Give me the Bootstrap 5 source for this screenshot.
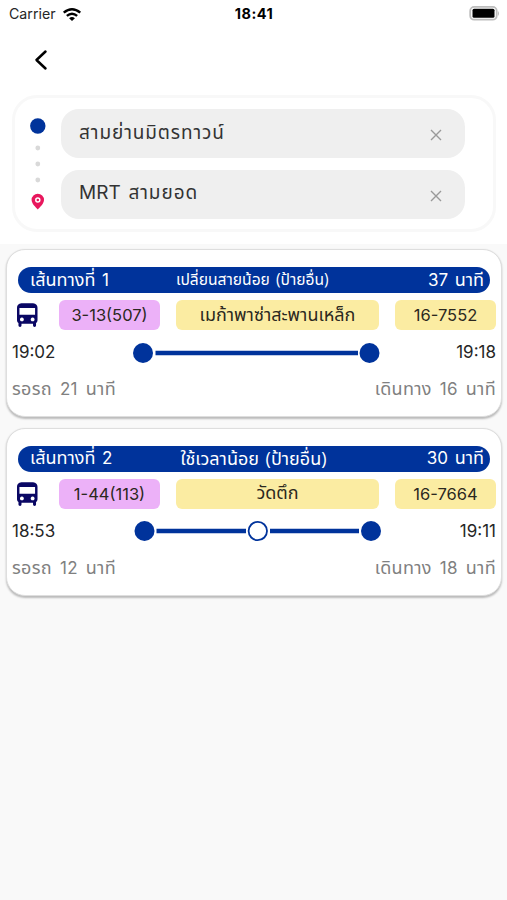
<!DOCTYPE html>
<html lang="th">
<head>
<meta charset="utf-8">
<meta name="viewport" content="width=device-width, initial-scale=1">
<title>เส้นทาง</title>
<link href="https://cdn.jsdelivr.net/npm/bootstrap@5.3.0/dist/css/bootstrap.min.css" rel="stylesheet">
<style>
body{font-family:"Open Sans","Noto Sans Thai",sans-serif;background:#f9f9f9;color:#262626;font-size:18px;line-height:24px;min-height:900px;overflow:hidden}
svg{display:block;flex:none}
.top-area{height:244px}
.status-row{height:28px;font-family:Inter,sans-serif;font-size:14.2px;padding:0 7px 0 9px}
.status-row>div{flex:1 1 0}
.status-row>.status-time{flex:none;font-size:14.5px;margin-right:1px}
.nav-row{height:67px;padding:21px 0 0 34px}
.search-box{margin:0 11px 0 12px;height:137px;border:3px solid #f8f8f8;border-radius:25px;padding:11px 28px 10px 15px}
.route-marks{width:16px;margin-right:15px;padding-top:4px}
.field{height:49px;border-radius:18px;background:#efefef;padding:0 22px 4px 18px;font-size:19px;color:#333}
.field svg{margin-top:6px}
.field .t{letter-spacing:.9px}
.trips{padding:5px 5px 0 6px;gap:10.5px}
.trip{height:168px;border:1px solid #dedede;border-radius:19px;background:#fff;box-shadow:0 1.5px 2px #bbb;padding:17px 5px 0}
.trip-head{height:26px;margin:0 6px;border-radius:13px;background:#00339b;color:#fff;padding:0 6px 2px 12px}
.trip-head .t{word-spacing:2px}
.trip-head .reason{flex:1;padding-left:68px}
.trip-head .reason-small{font-size:15.6px;padding-left:67px}
.chips{margin-top:7px;height:31px}
.bus{width:30px;margin-right:17px;padding:3px 0 0 5px}
.chip{height:30px;border-radius:6px;background:#fbeca2;color:#2b2820;display:flex;align-items:center;justify-content:center}
.chip-line{width:101px;background:#ecb1f8;margin-right:16px}
.chip-line .n{font-size:16.5px}
.chip-stop{width:203px;margin-right:16px;padding-bottom:3px}
.chip-plate{width:101px}
.chip-plate .n{font-size:16.5px}
.times{height:24px;margin-top:9px}
.times svg{margin-top:1px}
.waits{margin-top:12px;color:#808080}
.waits .t{letter-spacing:.3px;word-spacing:3px}
.t{display:inline-block;white-space:nowrap}
.n{font-family:Inter,sans-serif;font-size:17px}
.big-latin{font-size:19px;letter-spacing:0;margin-right:2px}
</style>
</head>
<body>
<svg width="0" height="0" class="position-absolute"><defs><g id="bus"><path fill-rule="evenodd" d="M4.500 0h12C19.500.6 21 2 21 4.500V17c0 1.500-.5 2.500-1.500 3.300V22.500c0 1.200-.6 1.700-1.500 1.700s-1.600-.5-1.600-1.700V21H4.600v1.500c0 1.200-.6 1.700-1.500 1.700s-1.600-.5-1.600-1.700v-2.200C.5 19.500 0 18.500 0 17V4.500C0 2 1.500.6 4.500 0ZM2.500 4.800v7h16v-7ZM5 14.500a2 2 0 1 0 .01 0Zm11 0a2 2 0 1 0 .01 0Z" fill="#0a0764"/></g><g id="cross" stroke="#999" stroke-width="1.400"><path d="m2 2 10 10M12 2 2 12"/></g></defs></svg>
<header class="top-area bg-white">
 <div class="status-row d-flex align-items-center">
  <div class="d-flex align-items-center"><span class="t">Carrier</span>
   <svg width="20" height="15" style="margin-left:6px" viewBox="0 0 20 16" fill="none" stroke="#000" stroke-width="2.600"><path d="M1.200 6Q10-1.300 18.800 6M4.500 9.500Q10 4.800 15.500 9.500"/><path d="M10 15 6.900 11.900Q10 9.200 13.100 11.900Z" fill="#000" stroke="none"/></svg></div>
  <div class="status-time fw-bold text-black"><span style="letter-spacing:.5px">18:41</span></div>
  <div class="d-flex justify-content-end"><svg width="31" height="16" viewBox="0 0 31 16"><rect x="1.200" y="0.900" width="26.500" height="12.800" rx="4" fill="#fff" stroke="#bdbdbd" stroke-width="1.800"/><rect x="3.500" y="2.800" width="22" height="9" rx="1.500"/><path d="M29 5q2 2.500 0 5z" fill="#bbb"/></svg></div>
 </div>
 <div class="nav-row"><svg width="15" height="22" viewBox="0 0 15 22" fill="none" stroke="#000" stroke-width="2.500" stroke-linecap="round" stroke-linejoin="round"><path d="M11.500 2.500 2.500 11l9 8.500"/></svg></div>
 <div class="search-box d-flex">
  <div class="route-marks"><svg width="16" height="102" viewBox="0 0 16 102"><circle cx="7.800" cy="13" r="7.700" fill="#00339b"/><g fill="#d9d9d9"><circle cx="7.800" cy="35" r="2.400"/><circle cx="7.800" cy="51" r="2.400"/><circle cx="7.800" cy="67" r="2.400"/></g><path d="M7.800 96.500C5.500 94 1.600 90.500 1.600 87a6.200 6.200 0 0 1 12.400 0c0 3.500-3.900 7-6.200 9.500z" fill="#e8175d"/><circle cx="7.800" cy="87" r="2" fill="#e8175d" stroke="#fff" stroke-width="1.500"/></svg></div>
  <div class="flex-grow-1 d-flex flex-column justify-content-between">
   <div class="field d-flex align-items-center justify-content-between"><span class="t">สามย่านมิตรทาวน์</span><svg width="14" height="14"><use href="#cross"/></svg></div>
   <div class="field d-flex align-items-center justify-content-between"><span class="t"><span class="n big-latin">MRT</span> สามยอด</span><svg width="14" height="14"><use href="#cross"/></svg></div>
  </div>
 </div>
</header>
<main class="trips d-flex flex-column">
 <article class="trip">
  <div class="trip-head d-flex align-items-center"><span class="t">เส้นทางที่ <span class="n">1</span></span><span class="t reason reason-small">เปลี่ยนสายน้อย (ป้ายอื่น)</span><span class="t"><span class="n">37</span> นาที</span></div>
  <div class="chips d-flex"><div class="bus"><svg width="21" height="25" viewBox="0 0 21.500 25"><use href="#bus"/></svg></div><div class="chip chip-line"><span class="t n">3-13(507)</span></div><div class="chip chip-stop"><span class="t">เมก้าพาซ่าสะพานเหล็ก</span></div><div class="chip chip-plate"><span class="t n">16-7552</span></div></div>
  <div class="times d-flex justify-content-between align-items-center"><span class="t n">19:02</span><svg width="250" height="22" viewBox="0 0 250 22" fill="#00339b"><circle cx="12" cy="11" r="10"/><path d="M24.500 11H227" stroke="#00339b" stroke-width="4.500"/><circle cx="238.500" cy="11" r="10"/></svg><span class="t n">19:18</span></div>
  <div class="waits d-flex justify-content-between"><span class="t">รอรถ <span class="n">21</span> นาที</span><span class="t">เดินทาง <span class="n">16</span> นาที</span></div>
 </article>
 <article class="trip">
  <div class="trip-head d-flex align-items-center"><span class="t">เส้นทางที่ <span class="n">2</span></span><span class="t reason">ใช้เวลาน้อย (ป้ายอื่น)</span><span class="t"><span class="n">30</span> นาที</span></div>
  <div class="chips d-flex"><div class="bus"><svg width="21" height="25" viewBox="0 0 21.500 25"><use href="#bus"/></svg></div><div class="chip chip-line"><span class="t n">1-44(113)</span></div><div class="chip chip-stop"><span class="t">วัดตึก</span></div><div class="chip chip-plate"><span class="t n">16-7664</span></div></div>
  <div class="times d-flex justify-content-between align-items-center"><span class="t n">18:53</span><svg width="250" height="22" viewBox="0 0 250 22" fill="#00339b" stroke="#00339b"><circle cx="12.500" cy="11" r="10" stroke="none"/><path d="M24.500 11H114M138 11h89" stroke-width="4.500"/><circle cx="125.800" cy="11" r="9.200" fill="#fff" stroke-width="1.800"/><circle cx="239" cy="11" r="10" stroke="none"/></svg><span class="t n">19:11</span></div>
  <div class="waits d-flex justify-content-between"><span class="t">รอรถ <span class="n">12</span> นาที</span><span class="t">เดินทาง <span class="n">18</span> นาที</span></div>
 </article>
</main>
<script src="https://cdn.jsdelivr.net/npm/bootstrap@5.3.0/dist/js/bootstrap.bundle.min.js"></script>
</body>
</html>
